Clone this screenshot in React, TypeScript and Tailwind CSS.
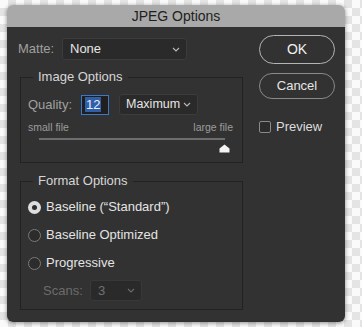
import React from 'react'

const font = { fontFamily: '"Liberation Sans", Arial, sans-serif' }

function Chevron({ dim = false }: { dim?: boolean }) {
  return (
    <svg width="8" height="5" viewBox="0 0 8 5" className="shrink-0">
      <path d="M1 1l3 3 3-3" fill="none" stroke={dim ? '#6a6a6a' : '#b8b8b8'} strokeWidth="1.1" />
    </svg>
  )
}

function Select({ label, className = '', dim = false }: { label: string; className?: string; dim?: boolean }) {
  return (
    <div
      className={`flex items-center justify-between rounded-[3px] border border-[#3c3c3c] bg-[#2a2a2a] pl-[7px] pr-[6px] text-[13px] ${
        dim ? 'text-[#707070] border-[#383838]' : 'text-[#e6e6e6]'
      } ${className}`}
    >
      <span>{label}</span>
      <Chevron dim={dim} />
    </div>
  )
}

function Radio({ checked, label }: { checked?: boolean; label: string }) {
  return (
    <div className="flex h-[16px] items-center gap-[5px]">
      {checked ? (
        <div className="flex h-[13px] w-[13px] items-center justify-center rounded-full bg-[#dedede]">
          <div className="h-[5px] w-[5px] rounded-full bg-[#2e2e2e]" />
        </div>
      ) : (
        <div className="h-[13px] w-[13px] rounded-full border border-[#7a7a7a] bg-[#2c2c2c]" />
      )}
      <span className="text-[13px] text-[#e4e4e4]">{label}</span>
    </div>
  )
}

export default function App() {
  return (
    <div
      className="h-[327px] w-[362px] overflow-hidden bg-[conic-gradient(#e4e4e4_25%,#fafafa_0_50%,#e4e4e4_0_75%,#fafafa_0)] bg-[length:16px_16px] pl-[7px] pt-[5px]"
      style={font}
    >
      <div className="flex h-[317px] w-[338px] flex-col overflow-hidden rounded-[6px] shadow-[0_1px_4px_rgba(0,0,0,0.45)]">
        {/* title bar */}
        <div className="flex h-[22px] items-center justify-center bg-[#a9a9a9] text-[14px] text-[#1e1e1e]">
          JPEG Options
        </div>

        <div className="flex flex-1 bg-[#323232]">
          {/* left column */}
          <div className="flex w-[236px] flex-col">
            <div className="ml-[11px] mt-[11px] flex h-[22px] items-center">
              <span className="w-[44px] text-[13px] text-[#a0a0a0]">Matte:</span>
              <Select label="None" className="h-[22px] w-[125px]" />
            </div>

            {/* Image Options */}
            <fieldset className="ml-[13px] mt-[9px] h-[94px] w-[223px] border border-[#222222] px-0">
              <legend className="ml-[12px] px-[5px] text-[13px] leading-[16px] text-[#d6d6d6]">Image Options</legend>
              <div className="ml-[7px] mt-[9px] flex h-[21px] items-center">
                <span className="w-[53px] text-[13px] text-[#a0a0a0]">Quality:</span>
                <div className="flex h-[20px] w-[28px] items-center border border-[#3d78c8] bg-[#1f1f1f] pl-[3px]">
                  <span className="bg-[#2f5fa8] px-[1px] text-[13px] leading-[15px] text-[#e8eefa]">12</span>
                </div>
                <Select label="Maximum" className="ml-[10px] h-[21px] w-[79px] !pl-[6px] !text-[12.5px]" />
              </div>
              <div className="ml-[7px] mr-[9px] mt-[6px] flex justify-between text-[10.5px] leading-[12px] text-[#9c9c9c]">
                <span>small file</span>
                <span>large file</span>
              </div>
              <div className="ml-[18px] mt-[5px] h-[2px] w-[186px] bg-[#6e6e6e]" />
              <div className="ml-[198px] mt-[4px]">
                <svg width="11" height="9" viewBox="0 0 11 9">
                  <path d="M5.5 0.5L10.5 4.5V8.5H0.5V4.5Z" fill="#f4f4f4" />
                </svg>
              </div>
            </fieldset>

            {/* Format Options */}
            <fieldset className="ml-[13px] mt-[10px] h-[137px] w-[223px] border border-[#222222] px-0">
              <legend className="ml-[12px] px-[5px] text-[13px] leading-[16px] text-[#d6d6d6]">Format Options</legend>
              <div className="ml-[7px] mt-[10px] flex flex-col gap-[12px]">
                <Radio checked label={'Baseline (\u201cStandard\u201d)'} />
                <Radio label="Baseline Optimized" />
                <Radio label="Progressive" />
              </div>
              <div className="ml-[22px] mt-[9px] flex h-[21px] items-center">
                <span className="w-[47px] text-[13px] text-[#6c6c6c]">Scans:</span>
                <Select label="3" dim className="h-[21px] w-[52px]" />
              </div>
            </fieldset>
          </div>

          {/* right column */}
          <div className="ml-[16px] mt-[8px] flex flex-col">
            <button className="flex h-[29px] w-[76px] items-center justify-center rounded-full border border-[#b4b4b4] text-[14px] text-[#f0f0f0]">
              OK
            </button>
            <button className="mt-[9px] flex h-[26px] w-[76px] items-center justify-center rounded-full border border-[#8a8a8a] text-[13px] text-[#e6e6e6]">
              Cancel
            </button>
            <div className="mt-[18px] flex items-center gap-[5px]">
              <div className="h-[12px] w-[12px] rounded-[2px] border border-[#8a8a8a] bg-[#2c2c2c]" />
              <span className="text-[13px] text-[#dcdcdc]">Preview</span>
            </div>
          </div>
        </div>
      </div>
    </div>
  )
}
